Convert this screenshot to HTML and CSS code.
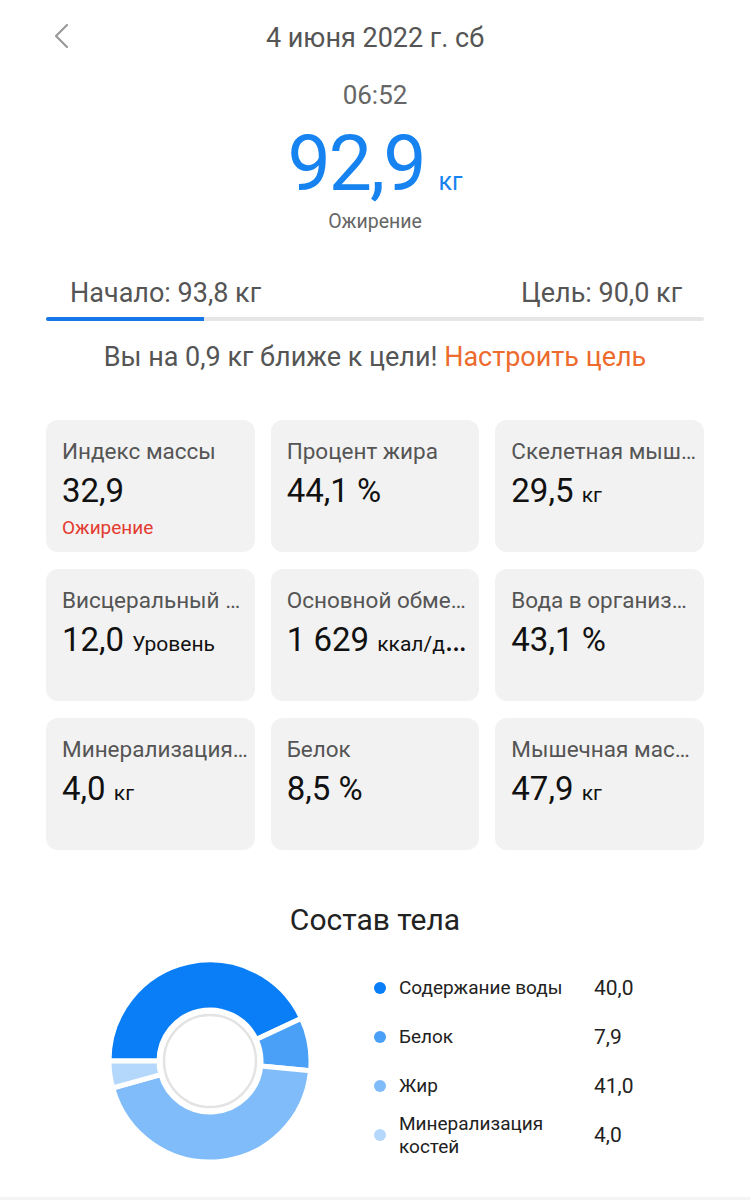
FILE: index.html
```html
<!DOCTYPE html>
<html lang="ru">
<head>
  <meta charset="UTF-8">
  <meta name="viewport" content="width=device-width, initial-scale=1.0">
  <title>Вес</title>
  <link rel="stylesheet" href="styles.css">
</head>
<body>
  <header class="topbar">
    <a class="back" href="#">
      <svg width="16" height="26" viewBox="0 0 16 26"><path d="M14 2 L3 13 L14 24" fill="none" stroke="#9a9a9a" stroke-width="2.2" stroke-linecap="round" stroke-linejoin="round"/></svg>
    </a>
    <h1 class="date">4 июня 2022 г. сб</h1>
    <span></span>
  </header>

  <main>
    <div class="time">06:52</div>
    <div class="weight"><span class="weight-num">92,9</span><span class="weight-unit">кг</span></div>
    <div class="status">Ожирение</div>

    <section class="goal">
      <div class="goal-labels">
        <span>Начало: 93,8 кг</span>
        <span>Цель: 90,0 кг</span>
      </div>
      <div class="bar"><div class="bar-fill" style="width: 24%"></div></div>
      <p class="hint">Вы на 0,9 кг ближе к цели! <a href="#">Настроить цель</a></p>
    </section>

    <section class="cards">
      <div class="card">
        <div class="card-label">Индекс массы</div>
        <div class="card-value">32,9</div>
        <div class="card-note">Ожирение</div>
      </div>
      <div class="card">
        <div class="card-label">Процент жира</div>
        <div class="card-value">44,1 %</div>
      </div>
      <div class="card">
        <div class="card-label">Скелетная мышечная масса</div>
        <div class="card-value">29,5 <small>кг</small></div>
      </div>
      <div class="card">
        <div class="card-label">Висцеральный жир</div>
        <div class="card-value">12,0 <small>Уровень</small></div>
      </div>
      <div class="card">
        <div class="card-label">Основной обмен веществ</div>
        <div class="card-value">1 629 <small>ккал/день</small></div>
      </div>
      <div class="card">
        <div class="card-label">Вода в организме</div>
        <div class="card-value">43,1 %</div>
      </div>
      <div class="card">
        <div class="card-label">Минерализация костей</div>
        <div class="card-value">4,0 <small>кг</small></div>
      </div>
      <div class="card">
        <div class="card-label">Белок</div>
        <div class="card-value">8,5 %</div>
      </div>
      <div class="card">
        <div class="card-label">Мышечная масса</div>
        <div class="card-value">47,9 <small>кг</small></div>
      </div>
    </section>

    <h2 class="section-title">Состав тела</h2>

    <section class="composition">
      <svg class="donut" width="206" height="206" viewBox="0 0 206 206">
        <g transform="translate(103 103)" stroke="#fff" stroke-width="5" stroke-linejoin="miter">
          <path fill="#0a7ef6" d="M-101,0 A101,101 0 0 1 91.54,-42.68 L46.22,-21.55 A51,51 0 0 0 -51,0 Z"/>
          <path fill="#4aa0f7" d="M91.54,-42.68 A101,101 0 0 1 100.52,9.86 L50.76,4.98 A51,51 0 0 0 46.22,-21.55 Z"/>
          <path fill="#80bcf9" d="M100.52,9.86 A101,101 0 0 1 -97.33,26.99 L-49.15,13.63 A51,51 0 0 0 50.76,4.98 Z"/>
          <path fill="#b4d8fb" d="M-97.33,26.99 A101,101 0 0 1 -101,0 L-51,0 A51,51 0 0 0 -49.15,13.63 Z"/>
          <circle r="46" fill="#fff" stroke="#e3e3e3" stroke-width="2.5"/>
        </g>
      </svg>
      <ul class="legend">
        <li><i class="dot c1"></i><span class="legend-name">Содержание воды</span><span class="legend-val">40,0</span></li>
        <li><i class="dot c2"></i><span class="legend-name">Белок</span><span class="legend-val">7,9</span></li>
        <li><i class="dot c3"></i><span class="legend-name">Жир</span><span class="legend-val">41,0</span></li>
        <li><i class="dot c4"></i><span class="legend-name">Минерализация костей</span><span class="legend-val">4,0</span></li>
      </ul>
    </section>
  </main>
  <div class="bottom-edge"></div>
</body>
</html>
```

FILE: styles.css
```css
body {
  font-family: Roboto, "Noto Sans", Arial, sans-serif;
  margin: 0;
  padding: 0;
  background: #fff;
  color: #222;
  width: 750px;
  height: 1200px;
  overflow: hidden;
  position: relative;
}
.topbar {
  display: grid;
  grid-template-columns: 1fr auto 1fr;
  align-items: center;
  height: 76px;
}
.back {
  justify-self: start;
  margin-left: 53px;
  margin-top: -4px;
  display: flex;
}
.date {
  margin: 0;
  font-size: 27px;
  font-weight: 400;
  color: #555;
}
.time {
  text-align: center;
  font-size: 26px;
  color: #666;
  line-height: 38px;
}
.weight {
  display: flex;
  justify-content: center;
  align-items: baseline;
  color: #1683f0;
  height: 80px;
  line-height: 80px;
  margin-top: 10px;
}
.weight-num {
  font-size: 77px;
  letter-spacing: -2px;
}
.weight-unit {
  font-size: 25px;
  line-height: 1;
  margin-left: 14px;
}
.status {
  text-align: center;
  font-size: 19.5px;
  color: #666;
  line-height: 26px;
  margin-top: 5px;
}
.goal {
  padding: 0 46px;
  margin-top: 41px;
}
.goal-labels {
  display: flex;
  justify-content: space-between;
  padding: 0 22px 0 24px;
  font-size: 27px;
  color: #555;
  line-height: 34px;
}
.bar {
  height: 4px;
  background: #e6e6e6;
  border-radius: 2px;
  margin-top: 7px;
  overflow: hidden;
}
.bar-fill {
  height: 100%;
  background: #1677e8;
}
.hint {
  text-align: center;
  font-size: 27px;
  color: #555;
  margin: 19px 0 0;
  line-height: 34px;
}
.hint a {
  color: #ec6b2d;
  text-decoration: none;
}
.cards {
  display: grid;
  grid-template-columns: repeat(3, 1fr);
  gap: 17px 16px;
  padding: 0 46px;
  margin-top: 46px;
}
.card {
  background: #f2f2f2;
  border-radius: 12px;
  height: 132px;
  box-sizing: border-box;
  padding: 17px 6px 0 16px;
  min-width: 0;
}
.card-label {
  font-size: 22.5px;
  color: #555;
  line-height: 28px;
  white-space: nowrap;
  overflow: hidden;
  text-overflow: ellipsis;
}
.card-value {
  font-size: 33px;
  color: #111;
  line-height: 40px;
  margin-top: 6px;
  white-space: nowrap;
  overflow: hidden;
  text-overflow: ellipsis;
}
.card-value small {
  font-size: 21px;
}
.card-note {
  font-size: 19px;
  color: #e33b30;
  line-height: 26px;
  margin-top: 4px;
}
.section-title {
  text-align: center;
  font-size: 30px;
  font-weight: 400;
  color: #222;
  margin: 50px 0 0;
  line-height: 40px;
}
.composition {
  display: flex;
  align-items: center;
  margin-top: 18px;
}
.donut {
  margin-left: 107px;
  flex: none;
}
.legend {
  list-style: none;
  margin: 0 0 0 61px;
  padding: 0;
  width: 300px;
}
.legend li {
  display: grid;
  grid-template-columns: 12px 182px auto;
  column-gap: 13px;
  align-items: center;
  min-height: 49px;
}
.legend-name {
  font-size: 19px;
  color: #222;
  line-height: 23px;
}
.legend-val {
  font-size: 21px;
  color: #222;
}
.dot {
  width: 12px;
  height: 12px;
  border-radius: 50%;
}
.c1 { background: #0a7ef6; }
.c2 { background: #4aa0f7; }
.c3 { background: #80bcf9; }
.c4 { background: #b4d8fb; }
.bottom-edge {
  position: absolute;
  left: 0;
  right: 0;
  bottom: 0;
  height: 3px;
  background: #f4f4f4;
}
```
